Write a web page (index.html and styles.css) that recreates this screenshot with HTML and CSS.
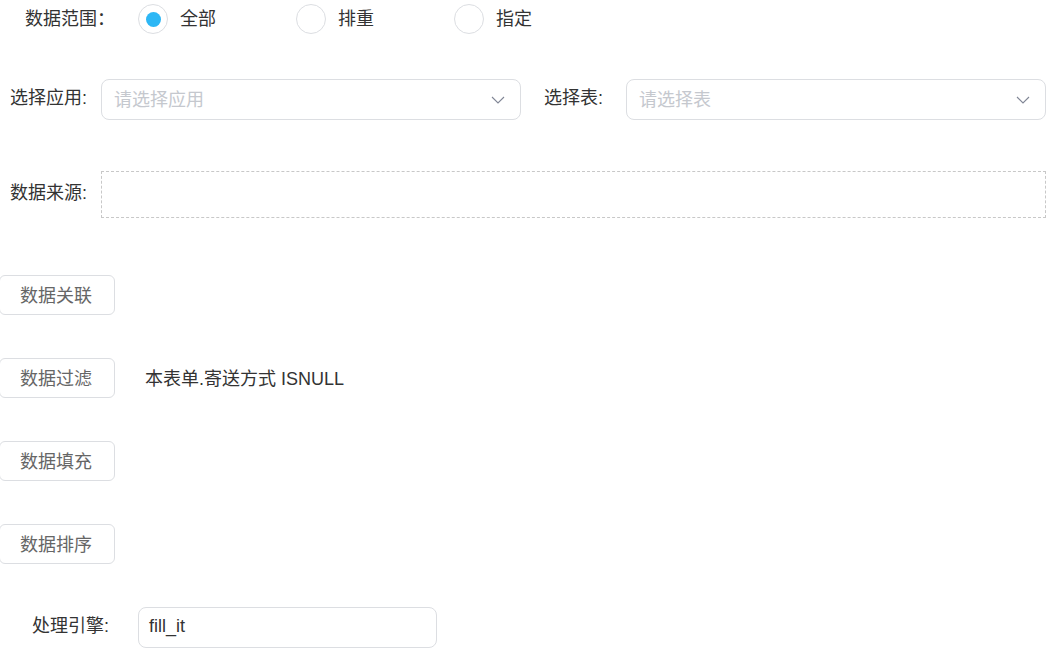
FILE: index.html
```html
<!DOCTYPE html>
<html lang="zh-CN">
<head>
  <meta charset="UTF-8" />
  <meta name="viewport" content="width=device-width, initial-scale=1.0"/>
  <title>数据设置</title>
  <link rel="stylesheet" href="styles.css">
</head>
<body>
  <div class="form">
    <div class="scope-row">
      <span class="scope-label">数据范围：</span>
      <label class="radio checked"><span class="radio-dot"></span>全部</label>
      <label class="radio"><span class="radio-dot"></span>排重</label>
      <label class="radio"><span class="radio-dot"></span>指定</label>
    </div>

    <div class="select-row">
      <span class="field-label app-label">选择应用:</span>
      <div class="select">
        <span class="placeholder">请选择应用</span>
        <svg class="arrow" width="14" height="8" viewBox="0 0 14 8"><path d="M1 1 L7 7 L13 1" fill="none" stroke="#808695" stroke-width="1.1"/></svg>
      </div>
      <span class="field-label table-label">选择表:</span>
      <div class="select">
        <span class="placeholder">请选择表</span>
        <svg class="arrow" width="14" height="8" viewBox="0 0 14 8"><path d="M1 1 L7 7 L13 1" fill="none" stroke="#808695" stroke-width="1.1"/></svg>
      </div>
    </div>

    <div class="source-row">
      <span class="field-label app-label">数据来源:</span>
      <div class="drop-box"></div>
    </div>

    <div class="action-row first">
      <button class="btn">数据关联</button>
    </div>
    <div class="action-row">
      <button class="btn">数据过滤</button>
      <span class="action-text">本表单.寄送方式 ISNULL</span>
    </div>
    <div class="action-row">
      <button class="btn">数据填充</button>
    </div>
    <div class="action-row">
      <button class="btn">数据排序</button>
    </div>

    <div class="engine-row">
      <span class="field-label engine-label">处理引擎:</span>
      <div class="input">fill_it</div>
    </div>
  </div>
</body>
</html>
```

FILE: styles.css
```css
body {
  margin: 0;
  background: #fff;
  font-family: "Liberation Sans", "Noto Sans CJK SC", sans-serif;
  font-size: 18px;
  color: #333;
}
.form {
  display: flex;
  flex-direction: column;
}
.scope-row {
  display: flex;
  align-items: center;
  height: 30px;
  margin-top: 4px;
  padding-left: 25px;
}
.scope-label {
  width: 113px;
  line-height: 30px;
}
.radio {
  display: flex;
  align-items: center;
  gap: 12px;
  width: 158px;
  line-height: 30px;
}
.radio-dot {
  width: 28px;
  height: 28px;
  border: 1px solid #dcdee2;
  border-radius: 50%;
  display: flex;
  align-items: center;
  justify-content: center;
}
.radio.checked .radio-dot::after {
  content: "";
  width: 15px;
  height: 15px;
  border-radius: 50%;
  background: #2db7f5;
}
.select-row {
  display: flex;
  align-items: center;
  margin-top: 45px;
  padding-left: 10px;
}
.field-label {
  line-height: 24px;
  padding-bottom: 3px;
}
.app-label {
  width: 91px;
}
.table-label {
  width: 82px;
  margin-left: 23px;
}
.select {
  width: 420px;
  height: 41px;
  box-sizing: border-box;
  border: 1px solid #dcdee2;
  border-radius: 8px;
  display: flex;
  align-items: center;
  justify-content: space-between;
  padding: 0 15px 0 12px;
}
.placeholder {
  color: #c5c8ce;
  padding-bottom: 3px;
}
.source-row {
  display: flex;
  align-items: center;
  margin-top: 51px;
  padding: 0 6px 0 10px;
}
.drop-box {
  flex: 1;
  height: 47px;
  box-sizing: border-box;
  border: 1px dashed #c8c8c8;
}
.action-row {
  display: flex;
  align-items: center;
  margin-top: 43px;
  margin-left: -1px;
}
.action-row.first {
  margin-top: 57px;
}
.btn {
  height: 40px;
  padding: 0 22px 3px 20px;
  background: #fff;
  border: 1px solid #dcdee2;
  border-radius: 6px;
  font-family: inherit;
  font-size: 18px;
  color: #666;
}
.action-text {
  margin-left: 30px;
  padding-bottom: 3px;
}
.engine-row {
  display: flex;
  align-items: center;
  margin-top: 43px;
  padding-left: 32px;
}
.engine-label {
  width: 106px;
}
.input {
  width: 299px;
  height: 41px;
  box-sizing: border-box;
  border: 1px solid #dcdee2;
  border-radius: 8px;
  padding: 0 0 3px 10px;
  display: flex;
  align-items: center;
}
```
